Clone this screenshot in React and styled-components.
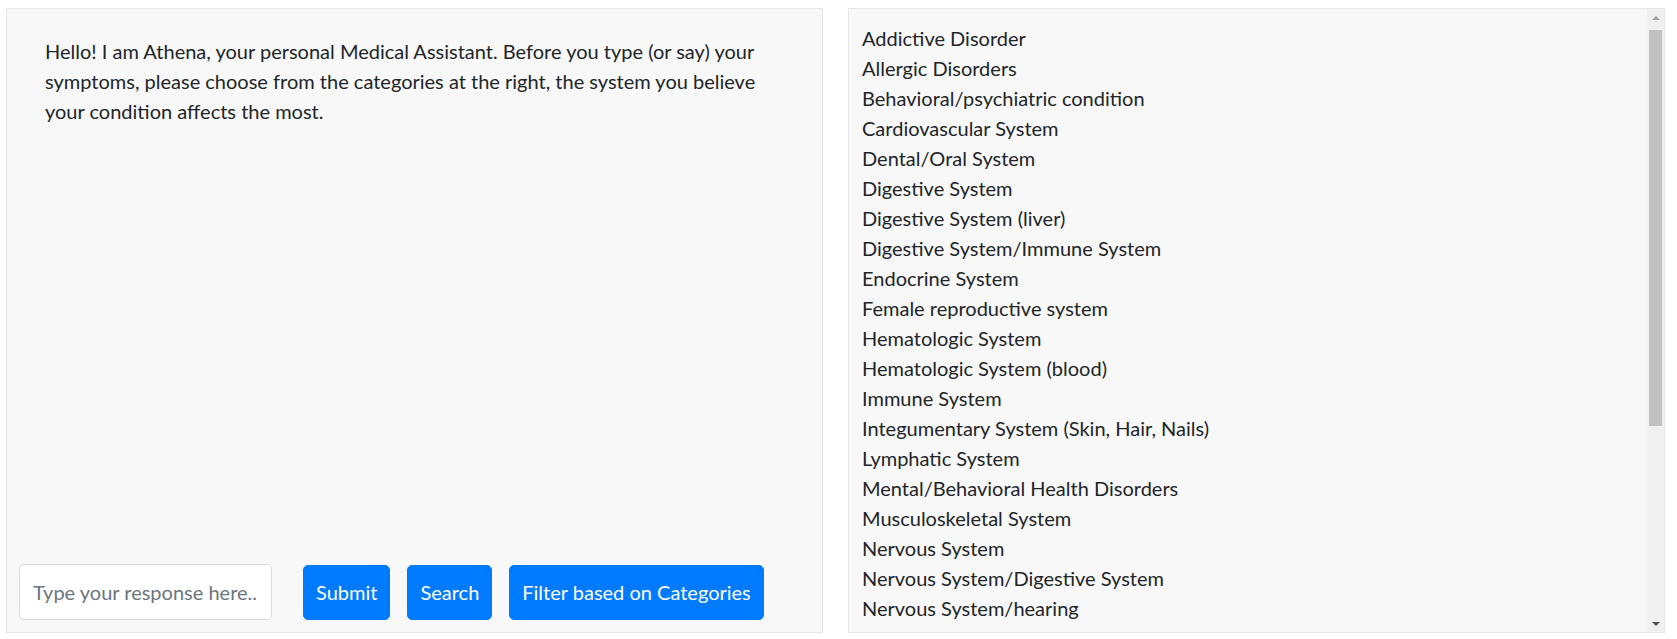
import React from 'react';
import styled, { createGlobalStyle } from 'styled-components';

const GlobalStyle = createGlobalStyle`
  html, body {
    margin: 0;
    padding: 0;
    background: #ffffff;
  }
  body {
    font-family: Lato, "Liberation Sans", sans-serif;
    font-size: 20px;
    line-height: 1.5;
    color: #212529;
  }
  * { box-sizing: border-box; }
`;

const Page = styled.div`
  display: grid;
  grid-template-columns: 817px 817px;
  gap: 25px;
  padding: 8px 12px 6px 6px;
  height: 639px;
`;

const Panel = styled.div`
  background: #f8f8f8;
  border: 1px solid #e6e6e6;
  min-height: 0;
`;

const ChatPanel = styled(Panel)`
  display: flex;
  flex-direction: column;
  justify-content: space-between;
  padding: 12px;
`;

const Message = styled.p`
  margin: 0;
  padding: 15px 26px;
`;

const InputRow = styled.div`
  display: flex;
  align-items: center;
`;

const ResponseInput = styled.input`
  width: 253px;
  height: 56px;
  margin-right: 31px;
  padding: 0 13px;
  font: inherit;
  color: #495057;
  background: #ffffff;
  border: 1px solid #dadada;
  border-radius: 5px;
  outline: none;
  &::placeholder {
    color: #6c757d;
  }
`;

const Button = styled.button`
  height: 55px;
  margin-right: 17px;
  padding: 0 12px;
  font: inherit;
  color: #ffffff;
  background: #007bff;
  border: 1px solid #007bff;
  border-radius: 5px;
  cursor: pointer;
`;

const CategoryPanel = styled(Panel)`
  display: flex;
`;

const ListArea = styled.div`
  flex: 1;
  overflow: hidden;
  padding: 14px 13px 0;
`;

const ScrollBar = styled.div`
  width: 17px;
  display: flex;
  flex-direction: column;
  background: #f0f0f0;
`;

const ScrollButton = styled.div`
  height: 17px;
  display: flex;
  align-items: center;
  justify-content: center;
`;

const Arrow = styled.span`
  width: 0;
  height: 0;
  border-left: 4px solid transparent;
  border-right: 4px solid transparent;
  ${p => p.$down
    ? 'border-top: 4px solid #505050;'
    : 'border-bottom: 4px solid #a3a3a3;'}
`;

const Track = styled.div`
  flex: 1;
  padding: 4px 2px 0;
`;

const Thumb = styled.div`
  height: 396px;
  background: #c1c1c1;
`;

const CategoryList = styled.ul`
  list-style: none;
  margin: 0;
  padding: 0;
`;

const CategoryItem = styled.li`
  cursor: pointer;
  white-space: nowrap;
`;

const categories = [
  'Addictive Disorder',
  'Allergic Disorders',
  'Behavioral/psychiatric condition',
  'Cardiovascular System',
  'Dental/Oral System',
  'Digestive System',
  'Digestive System (liver)',
  'Digestive System/Immune System',
  'Endocrine System',
  'Female reproductive system',
  'Hematologic System',
  'Hematologic System (blood)',
  'Immune System',
  'Integumentary System (Skin, Hair, Nails)',
  'Lymphatic System',
  'Mental/Behavioral Health Disorders',
  'Musculoskeletal System',
  'Nervous System',
  'Nervous System/Digestive System',
  'Nervous System/hearing',
  'Neurological and Blood Disorders',
  'Ophthalmologic System',
  'Otolaryngologic System',
  'Renal System',
  'Reproductive System',
  'Respiratory System',
  'Skeletal System',
  'Urinary System',
  'Vascular System',
  'Whole Body',
];

const App = () => {
  return (
    <>
      <GlobalStyle />
      <Page>
        <ChatPanel>
          <Message>
            Hello! I am Athena, your personal Medical Assistant. Before you type (or say) your
            symptoms, please choose from the categories at the right, the system you believe
            your condition affects the most.
          </Message>
          <InputRow>
            <ResponseInput placeholder="Type your response here.." />
            <Button>Submit</Button>
            <Button>Search</Button>
            <Button>Filter based on Categories</Button>
          </InputRow>
        </ChatPanel>
        <CategoryPanel>
          <ListArea>
            <CategoryList>
              {categories.map(c => (
                <CategoryItem key={c}>{c}</CategoryItem>
              ))}
            </CategoryList>
          </ListArea>
          <ScrollBar>
            <ScrollButton><Arrow /></ScrollButton>
            <Track><Thumb /></Track>
            <ScrollButton><Arrow $down /></ScrollButton>
          </ScrollBar>
        </CategoryPanel>
      </Page>
    </>
  );
};

export default App;
